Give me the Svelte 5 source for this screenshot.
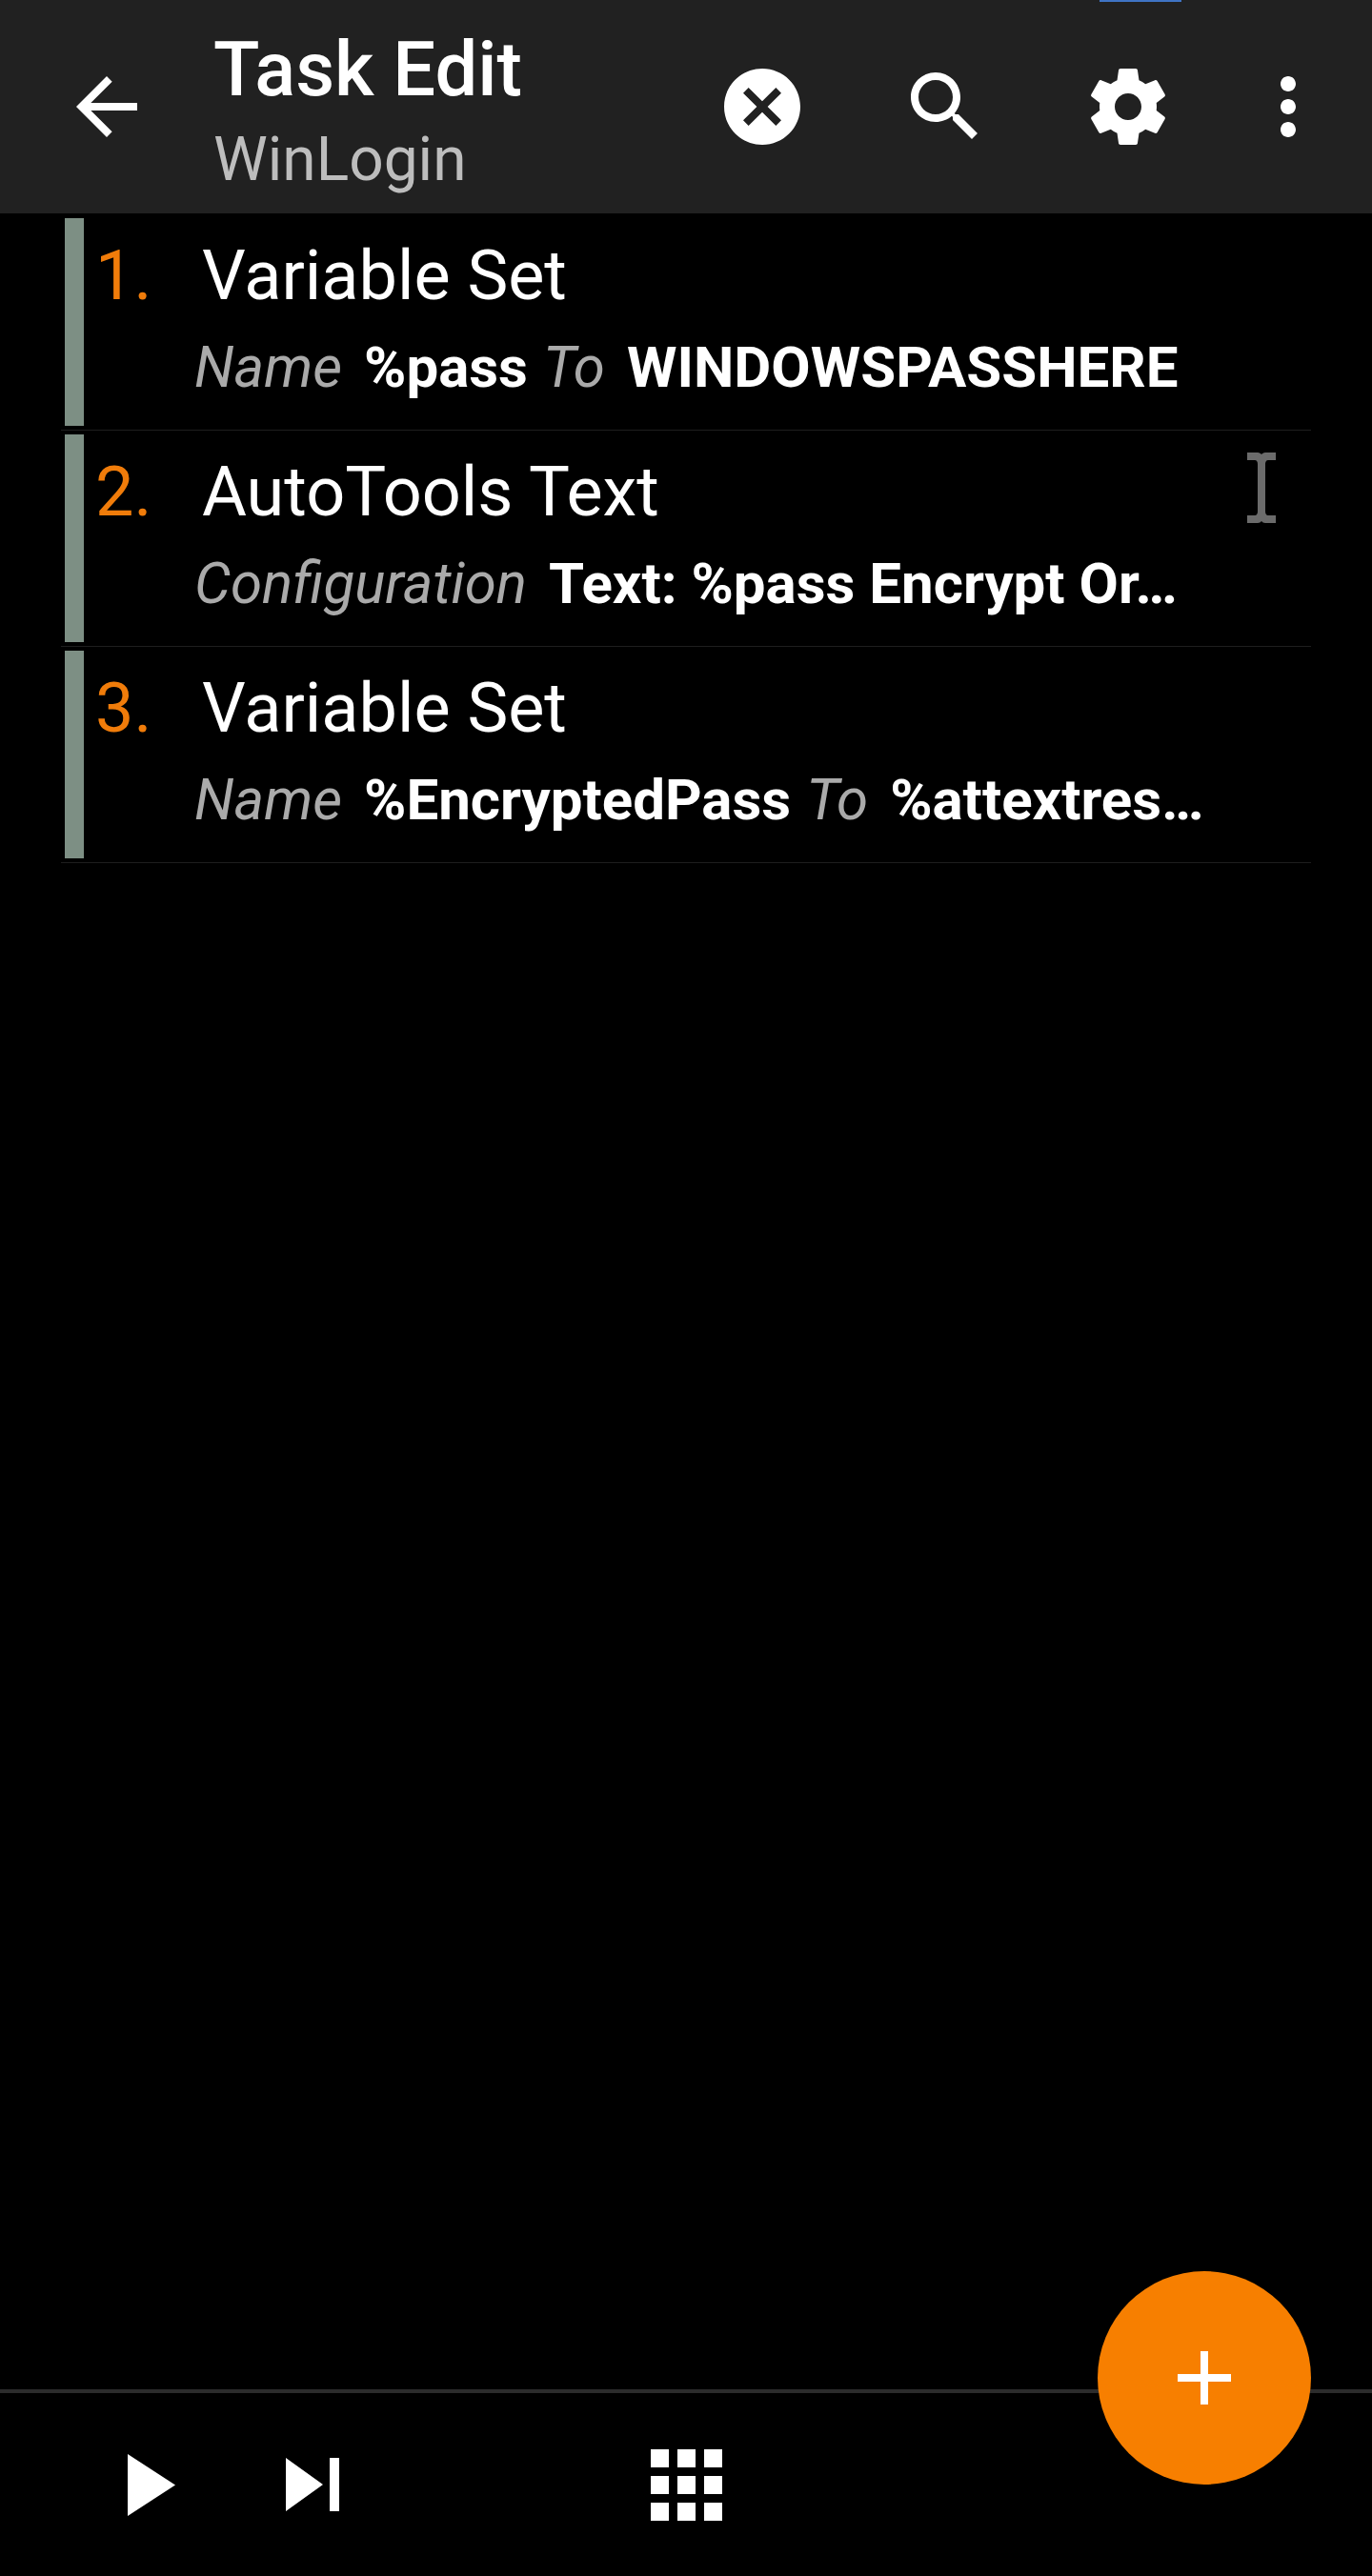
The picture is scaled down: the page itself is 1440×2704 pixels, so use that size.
<script>
  const rows = [
    { num: 1, title: 'Variable Set', args: [['Name', '%pass'], ['To', 'WINDOWSPASSHERE']] },
    { num: 2, title: 'AutoTools Text', args: [['Configuration', 'Text: %pass Encrypt Or…']], cursor: true },
    { num: 3, title: 'Variable Set', args: [['Name', '%EncryptedPass'], ['To', '%attextres…']] },
  ];
  const cells = Array.from({ length: 9 });
</script>

<div class="screen">
  <header class="appbar">
    <span class="notch"></span>
    <svg class="icon back" viewBox="0 0 24 24"><path d="M20 11H7.83l5.59-5.59L12 4l-8 8 8 8 1.41-1.41L7.83 13H20v-2z" /></svg>
    <div class="heading">
      <div class="title">Task Edit</div>
      <div class="subtitle">WinLogin</div>
    </div>
    <div class="actions">
      <svg class="icon" viewBox="0 0 24 24"><path d="M12 2C6.47 2 2 6.47 2 12s4.47 10 10 10 10-4.47 10-10S17.53 2 12 2zm5 13.59L15.59 17 12 13.41 8.41 17 7 15.59 10.59 12 7 8.41 8.41 7 12 10.59 15.59 7 17 8.41 13.41 12 17 15.59z" /></svg>
      <svg class="icon" viewBox="0 0 24 24"><path d="M15.5 14h-.79l-.28-.27C15.41 12.59 16 11.11 16 9.5 16 5.91 13.09 3 9.5 3S3 5.91 3 9.5 5.91 16 9.5 16c1.61 0 3.09-.59 4.23-1.57l.27.28v.79l5 4.99L20.49 19l-4.99-5zm-6 0C7.01 14 5 11.99 5 9.5S7.01 5 9.5 5 14 7.01 14 9.5 11.99 14 9.5 14z" /></svg>
      <svg class="icon" viewBox="0 0 24 24"><path d="M19.43 12.98c.04-.32.07-.64.07-.98s-.03-.66-.07-.98l2.11-1.65c.19-.15.24-.42.12-.64l-2-3.46c-.12-.22-.39-.3-.61-.22l-2.49 1c-.52-.4-1.08-.73-1.69-.98l-.38-2.65C14.46 2.18 14.25 2 14 2h-4c-.25 0-.46.18-.49.42l-.38 2.65c-.61.25-1.17.59-1.69.98l-2.49-1c-.23-.09-.49 0-.61.22l-2 3.46c-.13.22-.07.49.12.64l2.11 1.65c-.04.32-.07.65-.07.98s.03.66.07.98l-2.11 1.65c-.19.15-.24.42-.12.64l2 3.46c.12.22.39.3.61.22l2.49-1c.52.4 1.08.73 1.69.98l.38 2.65c.03.24.24.42.49.42h4c.25 0 .46-.18.49-.42l.38-2.65c.61-.25 1.17-.59 1.69-.98l2.49 1c.23.09.49 0 .61-.22l2-3.46c.12-.22.07-.49-.12-.64l-2.11-1.65zM12 15.5c-1.93 0-3.5-1.57-3.5-3.5s1.57-3.5 3.5-3.5 3.5 1.57 3.5 3.5-1.57 3.5-3.5 3.5z" /></svg>
      <svg class="icon more" viewBox="0 0 24 24"><path d="M12 8c1.1 0 2-.9 2-2s-.9-2-2-2-2 .9-2 2 .9 2 2 2zm0 2c-1.1 0-2 .9-2 2s.9 2 2 2 2-.9 2-2-.9-2-2-2zm0 6c-1.1 0-2 .9-2 2s.9 2 2 2 2-.9 2-2-.9-2-2-2z" /></svg>
    </div>
  </header>

  <main class="list">
    {#each rows as row}
      <div class="row">
        <span class="bar"></span>
        <div class="num">{row.num}.</div>
        <div class="body">
          <div class="name">{row.title}</div>
          <div class="args">
            {#each row.args as [label, value]}
              <span class="label">{label}</span>
              <span class="value">{value}</span>
            {/each}
          </div>
        </div>
        {#if row.cursor}
          <svg class="cursor" width="30" height="74" viewBox="0 0 30 74"><path d="M0 0h11c2 0 3 1 4 2 1-1 2-2 4-2h11v8H22c-2 0-3 2-3 4v50c0 2 1 4 3 4h8v8H19c-2 0-3-1-4-2-1 1-2 2-4 2H0v-8h8c2 0 3-2 3-4V12c0-2-1-4-3-4H0z" /></svg>
        {/if}
      </div>
    {/each}
  </main>

  <footer class="bottom">
    <svg class="play" width="50" height="65" viewBox="0 0 50 65"><path d="M0 0l50 32.5L0 65z" /></svg>
    <svg class="skip" width="56" height="56" viewBox="0 0 56 56"><path d="M0 0l39 28L0 56zM46 0h10v56H46z" /></svg>
    <div class="grid">
      {#each cells as _}
        <span></span>
      {/each}
    </div>
    <button class="fab" aria-label="Add">
      <svg width="56" height="56" viewBox="0 0 56 56"><path d="M24 0h8v24h24v8H32v24h-8V32H0v-8h24z" /></svg>
    </button>
  </footer>
</div>

<style>
  :global(body) {
    margin: 0;
    background: #000;
  }

  .screen {
    width: 1440px;
    height: 2704px;
    display: flex;
    flex-direction: column;
    background: #000;
    font-family: Roboto, "Liberation Sans", sans-serif;
    color: #fff;
  }

  .appbar {
    position: relative;
    height: 224px;
    flex-shrink: 0;
    display: flex;
    align-items: center;
    padding: 0 40px 0 64px;
    background: #212121;
    box-sizing: border-box;
  }

  .notch {
    position: absolute;
    top: 0;
    left: 1154px;
    width: 86px;
    height: 2px;
    background: #3f74c4;
  }

  .icon {
    width: 96px;
    height: 96px;
    flex-shrink: 0;
    fill: #fff;
  }

  .heading {
    margin-left: 64px;
    padding-top: 14px;
    flex: 1;
  }

  .title {
    font-size: 79.5px;
    font-weight: 500;
    line-height: 96px;
  }

  .subtitle {
    margin-top: 1px;
    font-size: 64px;
    line-height: 92px;
    color: #bdbdbd;
  }

  .actions {
    display: flex;
    align-items: center;
    gap: 96px;
  }

  .more {
    margin-left: -24px;
  }

  .list {
    flex: 1;
    padding: 5px 64px 0 64px;
  }

  .row {
    position: relative;
    height: 222px;
    margin-bottom: 4px;
    border-bottom: 1px solid #1e1e1e;
    display: flex;
  }

  .bar {
    width: 20px;
    height: 218px;
    margin-left: 4px;
    flex-shrink: 0;
    background: #7d8f84;
  }

  .num {
    width: 124px;
    padding: 19px 0 0 12px;
    box-sizing: border-box;
    font-size: 72px;
    line-height: 84px;
    color: #f07c0a;
  }

  .body {
    min-width: 0;
  }

  .name {
    padding-top: 19px;
    font-size: 72px;
    line-height: 84px;
  }

  .args {
    display: flex;
    margin-top: 19px;
    margin-left: -8px;
    font-size: 60px;
    line-height: 70px;
    white-space: nowrap;
  }

  .label {
    margin-right: 23px;
    font-style: italic;
    color: #aaa;
  }

  .value {
    margin-right: 16px;
    font-weight: 700;
  }

  .cursor {
    position: absolute;
    left: 1245px;
    top: 19px;
    fill: #6b6b6b;
  }

  .bottom {
    position: relative;
    height: 196px;
    flex-shrink: 0;
    display: flex;
    align-items: center;
    border-top: 4px solid #2c2c2c;
    box-sizing: border-box;
  }

  .play {
    margin-left: 134px;
    fill: #fff;
  }

  .skip {
    margin-left: 116px;
    fill: #fff;
  }

  .grid {
    margin-left: 327px;
    display: grid;
    grid-template-columns: repeat(3, 19px);
    grid-auto-rows: 19px;
    gap: 9px;
  }

  .grid span {
    background: #fff;
  }

  .fab {
    position: absolute;
    left: 1152px;
    top: -128px;
    width: 224px;
    height: 224px;
    padding: 0;
    border: 0;
    border-radius: 50%;
    background: #f77f00;
    display: flex;
    align-items: center;
    justify-content: center;
  }

  .fab svg {
    fill: #fff;
  }
</style>
